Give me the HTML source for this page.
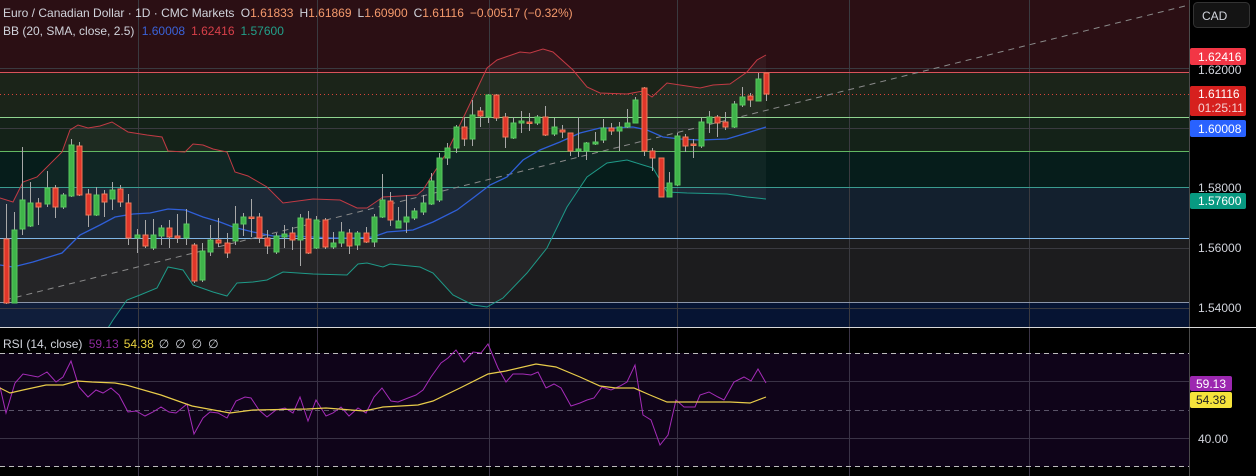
<!DOCTYPE html>
<html><head><meta charset="utf-8"><style>
html,body{margin:0;padding:0;background:#000;}
body{width:1256px;height:476px;overflow:hidden;position:relative;font-family:"Liberation Sans",sans-serif;}
svg{position:absolute;left:0;top:0;}
.t{font-family:"Liberation Sans",sans-serif;font-size:12px;}
.ax{font-family:"Liberation Sans",sans-serif;font-size:12px;}
</style></head><body>
<svg width="1256" height="476" viewBox="0 0 1256 476" xmlns="http://www.w3.org/2000/svg">
<rect x="0" y="0" width="1189" height="72" fill="#2b0f14"/>
<rect x="0" y="72" width="1189" height="45" fill="#1b2419"/>
<rect x="0" y="117" width="1189" height="35" fill="#142218"/>
<rect x="0" y="152" width="1189" height="36" fill="#061d1b"/>
<rect x="0" y="188" width="1189" height="50" fill="#13202e"/>
<rect x="0" y="238" width="1189" height="64" fill="#1c1c1e"/>
<rect x="0" y="302" width="1189" height="26" fill="#061433"/>
<polygon fill="rgba(255,255,255,0.045)" points="0,198 13,202 23,182 37,177 62,152 70,130 78,125 88,128 100,126 112,122 128,132 147,135 162,137 168,151 185,152 193,144 203,145 213,149 227,152 235,172 248,176 267,187 283,203 313,199 340,200 357,208 367,208 383,197 417,195 423,190 447,152 467,110 487,68 497,60 520,52 530,53 543,49 553,52 573,70 587,87 600,93 627,94 643,91 652,97 667,83 680,85 700,88 713,85 730,84 747,72 757,60 766,55 766,199 747,197 727,194 687,193 667,192 653,168 643,165 627,160 607,163 587,177 567,207 547,248 527,273 503,298 487,307 473,305 453,295 433,273 420,267 390,264 383,267 367,263 358,264 347,275 313,274 283,272 267,280 253,282 237,283 227,296 213,292 193,285 183,270 168,267 157,288 140,295 127,300 113,320 108,328 0,328"/>
<g stroke="#3a3a40" stroke-width="1">
<line x1="0" y1="68.5" x2="1189" y2="68.5"/><line x1="0" y1="128.5" x2="1189" y2="128.5"/>
<line x1="0" y1="248.5" x2="1189" y2="248.5"/><line x1="0" y1="308.5" x2="1189" y2="308.5"/>
<line x1="138.5" y1="0" x2="138.5" y2="476"/><line x1="317.5" y1="0" x2="317.5" y2="476"/>
<line x1="489.5" y1="0" x2="489.5" y2="476"/><line x1="677.5" y1="0" x2="677.5" y2="476"/>
<line x1="849.5" y1="0" x2="849.5" y2="476"/><line x1="1029.5" y1="0" x2="1029.5" y2="476"/>
</g>
<line x1="0" y1="72.5" x2="1189" y2="72.5" stroke="#d9535a"/>
<line x1="0" y1="117.5" x2="1189" y2="117.5" stroke="#8fd48f"/>
<line x1="0" y1="151.5" x2="1189" y2="151.5" stroke="#62b862"/>
<line x1="0" y1="187.5" x2="1189" y2="187.5" stroke="#3a9c90"/>
<line x1="0" y1="238.5" x2="1189" y2="238.5" stroke="#7fb6e6"/>
<line x1="0" y1="302.5" x2="1189" y2="302.5" stroke="#8a94a8"/>
<line x1="0" y1="94.5" x2="1189" y2="94.5" stroke="#d9453a" stroke-dasharray="1,3"/>
<line x1="5" y1="300" x2="1193" y2="4" stroke="#8a8a8a" stroke-dasharray="6,5"/>
<polyline fill="none" stroke="#c23a44" stroke-width="1" points="0,198 13,202 23,182 37,177 62,152 70,130 78,125 88,128 100,126 112,122 128,132 147,135 162,137 168,151 185,152 193,144 203,145 213,149 227,152 235,172 248,176 267,187 283,203 313,199 340,200 357,208 367,208 383,197 417,195 423,190 447,152 467,110 487,68 497,60 520,52 530,53 543,49 553,52 573,70 587,87 600,93 627,94 643,91 652,97 667,83 680,85 700,88 713,85 730,84 747,72 757,60 766,55"/>
<polyline fill="none" stroke="#2f5fd8" stroke-width="1.3" points="0,265 13,267 33,262 62,253 80,235 100,225 115,217 133,214 150,213 168,209 185,210 203,217 220,222 233,227 253,232 273,236 293,236 313,237 333,238 353,238 373,237 387,232 413,230 433,222 457,210 473,198 490,185 507,177 523,160 540,150 560,142 580,133 600,128 613,128 633,127 647,130 663,137 680,139 700,140 727,139 747,133 766,127"/>
<polyline fill="none" stroke="#1e9a88" stroke-width="1" points="108,328 113,320 127,300 140,295 157,288 168,267 183,270 193,285 213,292 227,296 237,283 253,282 267,280 283,272 313,274 347,275 358,264 367,263 383,267 390,264 420,267 433,273 453,295 473,305 487,307 503,298 527,273 547,248 567,207 587,177 607,163 627,160 643,165 653,168 667,192 687,193 727,194 747,197 766,199"/>
<path stroke="#a8a8a8" stroke-width="1" fill="none" d="M6.5 204V304M14.5 212V303M22.5 147V235M30.5 182V227M38.5 198V225M47.5 171V207M55.5 185V218M63.5 193V209M71.5 139V197M79.5 142V196M88.5 189V227M96.5 187V216M104.5 190V217M112.5 182V210M120.5 185V207M128.5 194V245M137.5 229V253M145.5 220V248M153.5 219V250M161.5 225V245M169.5 220V248M177.5 214V243M186.5 209V245M194.5 243V283M202.5 243V282M210.5 225V256M218.5 218V247M227.5 233V258M235.5 206V245M243.5 213V236M251.5 199V237M259.5 213V243M267.5 230V254M276.5 233V254M284.5 225V248M292.5 227V250M300.5 214V266M308.5 211V254M316.5 216V249M325.5 218V249M333.5 232V249M341.5 222V247M349.5 229V254M357.5 231V250M366.5 227V243M374.5 214V247M382.5 174V218M390.5 192V226M398.5 207V228M406.5 195V233M414.5 208V220M423.5 195V215M431.5 173V205M439.5 153V202M447.5 143V165M456.5 125V153M464.5 117V146M472.5 100V146M480.5 107V127M488.5 94V123M496.5 94V121M505.5 113V148M513.5 117V139M521.5 111V133M529.5 113V131M537.5 115V125M545.5 106V136M554.5 118V136M562.5 125V138M570.5 133V156M578.5 117V157M586.5 142V160M595.5 132V145M603.5 119V143M611.5 123V135M619.5 122V151M627.5 109V128M635.5 97V123M644.5 87V156M652.5 148V171M661.5 158V197M669.5 172V197M677.5 133V186M685.5 134V152M693.5 139V158M701.5 118V148M709.5 111V133M717.5 115V137M725.5 112V130M734.5 101V128M742.5 87V107M750.5 93V107M758.5 73V101M766.5 73V101"/>
<g fill="#3fb44a" stroke="#58c85f" stroke-width="1">
<rect x="12" y="230" width="5" height="73"/><rect x="20" y="200" width="5" height="29"/><rect x="28" y="203" width="5" height="23"/><rect x="45" y="188" width="5" height="16"/><rect x="61" y="195" width="5" height="12"/><rect x="69" y="145" width="5" height="51"/><rect x="94" y="195" width="5" height="20"/><rect x="110" y="190" width="5" height="9"/><rect x="135" y="235" width="5" height="3"/><rect x="151" y="235" width="5" height="13"/><rect x="159" y="228" width="5" height="8"/><rect x="184" y="224" width="5" height="14"/><rect x="200" y="251" width="5" height="29"/><rect x="208" y="240" width="5" height="12"/><rect x="233" y="224" width="5" height="17"/><rect x="241" y="217" width="5" height="7"/><rect x="274" y="236" width="5" height="16"/><rect x="282" y="234" width="5" height="3"/><rect x="298" y="218" width="5" height="22"/><rect x="314" y="220" width="5" height="28"/><rect x="331" y="243" width="5" height="4"/><rect x="339" y="232" width="5" height="11"/><rect x="355" y="233" width="5" height="12"/><rect x="372" y="217" width="5" height="25"/><rect x="380" y="200" width="5" height="17"/><rect x="396" y="221" width="5" height="7"/><rect x="404" y="217" width="5" height="5"/><rect x="412" y="211" width="5" height="7"/><rect x="421" y="203" width="5" height="9"/><rect x="429" y="181" width="5" height="23"/><rect x="437" y="158" width="5" height="42"/><rect x="445" y="148" width="5" height="10"/><rect x="454" y="127" width="5" height="21"/><rect x="470" y="115" width="5" height="24"/><rect x="486" y="95" width="5" height="22"/><rect x="511" y="123" width="5" height="15"/><rect x="519" y="121" width="5" height="2"/><rect x="535" y="117" width="5" height="6"/><rect x="552" y="127" width="5" height="7"/><rect x="576" y="149" width="5" height="2"/><rect x="584" y="143" width="5" height="8"/><rect x="593" y="142" width="5" height="2"/><rect x="601" y="128" width="5" height="12"/><rect x="617" y="127" width="5" height="4"/><rect x="625" y="123" width="5" height="4"/><rect x="633" y="100" width="5" height="23"/><rect x="667" y="183" width="5" height="14"/><rect x="675" y="136" width="5" height="49"/><rect x="699" y="122" width="5" height="24"/><rect x="707" y="117" width="5" height="6"/><rect x="732" y="104" width="5" height="23"/><rect x="740" y="97" width="5" height="8"/><rect x="756" y="79" width="5" height="22"/>
</g>
<g fill="#e0362a" stroke="#f07a5a" stroke-width="1">
<rect x="4" y="239" width="5" height="64"/><rect x="36" y="203" width="5" height="4"/><rect x="53" y="188" width="5" height="19"/><rect x="77" y="146" width="5" height="49"/><rect x="86" y="194" width="5" height="21"/><rect x="102" y="194" width="5" height="8"/><rect x="118" y="189" width="5" height="13"/><rect x="126" y="203" width="5" height="35"/><rect x="143" y="235" width="5" height="11"/><rect x="167" y="228" width="5" height="9"/><rect x="175" y="236" width="5" height="2"/><rect x="192" y="245" width="5" height="36"/><rect x="216" y="240" width="5" height="3"/><rect x="225" y="243" width="5" height="10"/><rect x="249" y="217" width="5" height="1.5"/><rect x="257" y="217" width="5" height="21"/><rect x="265" y="238" width="5" height="8"/><rect x="290" y="233" width="5" height="7"/><rect x="306" y="219" width="5" height="34"/><rect x="323" y="220" width="5" height="27"/><rect x="347" y="233" width="5" height="13"/><rect x="364" y="233" width="5" height="9"/><rect x="388" y="201" width="5" height="19"/><rect x="462" y="127" width="5" height="12"/><rect x="478" y="111" width="5" height="5"/><rect x="494" y="95" width="5" height="23"/><rect x="503" y="117" width="5" height="20"/><rect x="527" y="122" width="5" height="1.5"/><rect x="543" y="117" width="5" height="18"/><rect x="560" y="130" width="5" height="2"/><rect x="568" y="133" width="5" height="18"/><rect x="609" y="128" width="5" height="3"/><rect x="642" y="88" width="5" height="63"/><rect x="650" y="151" width="5" height="7"/><rect x="659" y="158" width="5" height="39"/><rect x="683" y="137" width="5" height="9"/><rect x="691" y="144" width="5" height="1.5"/><rect x="715" y="117" width="5" height="6"/><rect x="723" y="122" width="5" height="5"/><rect x="748" y="96" width="5" height="4"/><rect x="764" y="73" width="5" height="21"/>
</g>
<text class="t" x="3" y="17" fill="#d1d4dc">Euro / Canadian Dollar · 1D · CMC Markets <tspan dx="3">O</tspan><tspan fill="#f59a6c">1.61833</tspan><tspan dx="6">H</tspan><tspan fill="#f59a6c">1.61869</tspan><tspan dx="6">L</tspan><tspan fill="#f59a6c">1.60900</tspan><tspan dx="6">C</tspan><tspan fill="#f59a6c">1.61116</tspan><tspan dx="6" fill="#f59a6c">−0.00517 (−0.32%)</tspan></text>
<text class="t" x="3" y="35" fill="#d1d4dc">BB (20, SMA, close, 2.5) <tspan dx="4" fill="#3a62d8">1.60008</tspan><tspan dx="6" fill="#d8404a">1.62416</tspan><tspan dx="6" fill="#22a08a">1.57600</tspan></text>
<rect x="0" y="328" width="1189" height="148" fill="#000"/>
<rect x="0" y="353" width="1189" height="114" fill="#0f0419"/>
<line x1="0" y1="327.5" x2="1256" y2="327.5" stroke="#d8d8d8"/>
<g stroke="#3a3346"><line x1="0" y1="381.5" x2="1189" y2="381.5"/><line x1="0" y1="438.5" x2="1189" y2="438.5"/>
<line x1="138.5" y1="328" x2="138.5" y2="476"/><line x1="317.5" y1="328" x2="317.5" y2="476"/><line x1="489.5" y1="328" x2="489.5" y2="476"/><line x1="677.5" y1="328" x2="677.5" y2="476"/><line x1="849.5" y1="328" x2="849.5" y2="476"/><line x1="1029.5" y1="328" x2="1029.5" y2="476"/></g>
<line x1="0" y1="353.5" x2="1189" y2="353.5" stroke="#bdbdbd" stroke-dasharray="5,4"/>
<line x1="0" y1="466.5" x2="1189" y2="466.5" stroke="#bdbdbd" stroke-dasharray="5,4"/>
<line x1="0" y1="410.5" x2="1189" y2="410.5" stroke="#5a5468" stroke-dasharray="5,4"/>
<polyline fill="none" stroke="#a52cb8" stroke-width="1" points="0,387 6,413 15,383 23,374 38,377 47,372 56,382 63,377 71,361 79,387 88,397 96,390 103,393 111,388 119,395 128,412 136,411 145,416 153,412 161,407 169,412 176,413 187,404 194,434 203,418 210,412 218,413 227,418 236,401 245,397 251,398 259,410 267,417 276,410 285,408 293,413 300,397 308,421 316,400 326,416 333,413 341,407 349,416 358,408 366,413 374,397 382,388 391,401 398,402 408,398 416,395 423,390 431,377 441,363 448,358 456,350 464,362 473,352 481,353 488,344 498,368 506,382 513,374 523,374 531,375 538,372 546,388 554,384 561,388 571,406 580,403 587,400 594,398 602,387 611,390 620,386 627,382 635,365 643,415 651,420 660,445 668,435 676,400 684,407 695,407 700,395 709,392 718,397 724,400 734,382 744,377 751,381 758,369 766,383"/>
<polyline fill="none" stroke="#e8cc4a" stroke-width="1.2" points="0,388 10,393 23,390 46,385 63,385 77,381 92,382 115,383 126,385 161,395 192,406 230,413 253,410 307,409 326,408 364,411 383,407 418,405 433,401 460,388 488,374 506,371 536,364 556,367 580,377 600,386 616,388 634,388 650,395 667,402 690,402 730,402 750,403 766,397"/>
<text class="t" x="3" y="348" fill="#d1d4dc">RSI (14, close) <tspan dx="3" fill="#8e2a9e">59.13</tspan><tspan dx="5" fill="#e8d040">54.38</tspan><tspan dx="5">∅</tspan><tspan dx="6">∅</tspan><tspan dx="6">∅</tspan><tspan dx="6">∅</tspan></text>
<rect x="1189" y="0" width="67" height="476" fill="#000"/>
<line x1="1189.5" y1="0" x2="1189.5" y2="476" stroke="#4a4a4a"/>
<line x1="1189" y1="327.5" x2="1256" y2="327.5" stroke="#d8d8d8"/>
<rect x="1193.5" y="2.5" width="56" height="25" rx="4" fill="#141414" stroke="#333"/>
<text class="ax" x="1202" y="20" fill="#d1d4dc">CAD</text>
<text class="ax" x="1198" y="74" fill="#d1d4dc">1.62000</text>
<rect x="1190" y="48" width="56" height="17" rx="2" fill="#f23645"/>
<text class="ax" x="1198" y="61" fill="#ffffff">1.62416</text>
<rect x="1190" y="86" width="56" height="30" rx="2" fill="#d6201e"/>
<text class="ax" x="1198" y="98" fill="#ffffff">1.61116</text>
<text class="ax" x="1198" y="112" fill="#f5d0d0">01:25:11</text>
<rect x="1190" y="120" width="56" height="17" rx="2" fill="#2962ff"/>
<text class="ax" x="1198" y="133" fill="#ffffff">1.60008</text>
<text class="ax" x="1198" y="192" fill="#d1d4dc">1.58000</text>
<rect x="1190" y="193" width="56" height="16" rx="2" fill="#089981"/>
<text class="ax" x="1198" y="205" fill="#ffffff">1.57600</text>
<text class="ax" x="1198" y="252" fill="#d1d4dc">1.56000</text>
<text class="ax" x="1198" y="312" fill="#d1d4dc">1.54000</text>
<rect x="1190" y="376" width="42" height="15" rx="2" fill="#9c27b0"/>
<text class="ax" x="1196" y="388" fill="#ffffff">59.13</text>
<rect x="1190" y="392" width="42" height="16" rx="2" fill="#f5e33b"/>
<text class="ax" x="1196" y="404" fill="#222222">54.38</text>
<text class="ax" x="1198" y="443" fill="#d1d4dc">40.00</text>
</svg>
</body></html>
